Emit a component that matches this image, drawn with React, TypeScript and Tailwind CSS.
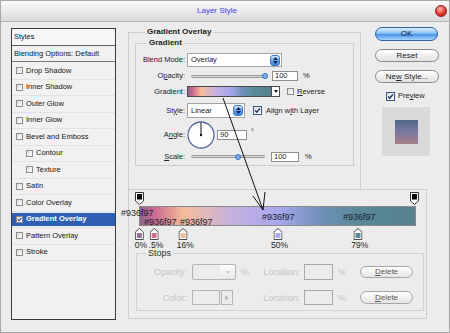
import React from "react";

const GRADIENT =
  "bg-[linear-gradient(to_right,#8e6690_0%,#c8688e_5%,#f6bd9c_16%,#c6b0de_33%,#a8a8ee_50%,#6f90b8_66%,#5a8a98_79%,#56808e_100%)]";

const effects = [
  { label: "Drop Shadow" },
  { label: "Inner Shadow" },
  { label: "Outer Glow" },
  { label: "Inner Glow" },
  { label: "Bevel and Emboss" },
  { label: "Contour", sub: true },
  { label: "Texture", sub: true },
  { label: "Satin" },
  { label: "Color Overlay" },
  { label: "Gradient Overlay", active: true },
  { label: "Pattern Overlay" },
  { label: "Stroke" },
];

const stops = [
  { pos: 0, color: "#936f97", label: "0%" },
  { pos: 5.4, color: "#cf6f93", label: ".5%" },
  { pos: 16, color: "#f6bd9c", label: "16%" },
  { pos: 50, color: "#a9a9f0", label: "50%" },
  { pos: 79, color: "#5a8a98", label: "79%" },
];

// where the hex notes sit on the bar
const hexNotes = [
  { x: -19, y: 1 },
  { x: 4, y: 10 },
  { x: 40, y: 10 },
  { x: 122, y: 5 },
  { x: 203, y: 5 },
];

const Check = ({ checked = false, size = "small" }: { checked?: boolean; size?: "small" | "big" }) => (
  <span
    className={`flex shrink-0 items-center justify-center border bg-gradient-to-br from-[#dedede] to-white ${
      size === "big" ? "h-[9px] w-[9px] border-[#3c5a8c]" : "h-[7px] w-[7px] border-[#8c8c8c]"
    }`}
  >
    {checked && (
      <svg viewBox="0 0 8 8" className="h-full w-full">
        <path d="M1.3 4 L3.2 6 L6.8 1.6" stroke="#1b2f66" strokeWidth="1.7" fill="none" />
      </svg>
    )}
  </span>
);

const Spinner = () => (
  <span className="flex h-[11px] w-[10px] flex-col items-center justify-center gap-[1px] rounded-[3px] border border-[#3f76c4] bg-gradient-to-b from-[#d4e9ff] via-[#6aa9ef] to-[#3a84dc]">
    <svg width="5" height="3" viewBox="0 0 5 3">
      <path d="M2.5 0 L5 3 H0 Z" fill="#10204a" />
    </svg>
    <svg width="5" height="3" viewBox="0 0 5 3">
      <path d="M0 0 H5 L2.5 3 Z" fill="#10204a" />
    </svg>
  </span>
);

const Slider = ({ width, thumb }: { width: string; thumb: string }) => (
  <div className={`relative h-[3px] rounded-full border border-[#9c9c9c] bg-[#d6d6d6] ${width}`}>
    <span
      className={`absolute top-1/2 h-[6px] w-[6px] -translate-y-1/2 rounded-full border border-[#3a6fc0] bg-[#7eaee8] ${thumb}`}
    />
  </div>
);

const Field = ({ children, width }: { children: React.ReactNode; width: string }) => (
  <span className={`flex h-[10px] items-center border border-[#8e8e8e] bg-white pl-[2px] ${width}`}>{children}</span>
);

const Row = ({
  label,
  className,
  children,
}: {
  label: React.ReactNode;
  className: string;
  children: React.ReactNode;
}) => (
  <div className={`flex items-center ${className}`}>
    <span className="w-[49px] text-right">{label}</span>
    <div className="ml-[2px] flex items-center">{children}</div>
  </div>
);

const TitleBar = () => (
  <div className="grid h-[21px] grid-cols-[1fr_auto_1fr] items-center border-b border-[#b4b4b4] bg-gradient-to-b from-[#fbfbfb] to-[#d9d9d9]">
    <span />
    <span className="mr-[16px] text-[8px] text-[#4040f0]">Layer Style</span>
    <span className="flex justify-end pr-[2px]">
      <span className="h-[12px] w-[12px] rounded-full border border-[#9a1c1c] bg-[radial-gradient(circle_at_40%_30%,#ffb6ac,#e0392e_55%,#9e1616)]" />
    </span>
  </div>
);

const StylesList = () => (
  <div className="mt-[1px] flex h-[292px] w-[105px] shrink-0 flex-col border border-[#3c3c3c] bg-[#f1f1f1] text-[#151515]">
    <div className="flex h-[17px] items-center border-b border-[#5c5c5c] bg-[#f6f6f6] pl-[2px]">Styles</div>
    <div className="flex h-[16px] items-center border-b border-[#7a7a7a] pl-[2px]">Blending Options: Default</div>
    <div className="pt-[1px]">
      {effects.map((e) => (
        <div key={e.label} className="h-[16.5px] border-b border-[#e2e2e2] py-[1px]">
          <div
            className={`flex h-full items-center gap-[3px] ${e.sub ? "pl-[14px]" : "pl-[4px]"} ${
              e.active ? "bg-[#2f5fb3] font-bold text-white" : ""
            }`}
          >
            <Check checked={e.active} />
            <span>{e.label}</span>
          </div>
        </div>
      ))}
    </div>
  </div>
);

const OverlayFieldset = () => (
  <fieldset className="h-[162px] w-[233px] shrink-0 border border-b-0 border-[#cdcdcd] px-[6px] pt-[1px]">
    <legend className="ml-[10px] px-[2px] text-[8px] font-bold">Gradient Overlay</legend>
    <fieldset className="border border-[#cdcdcd] pb-[3px] pt-[5px]">
      <legend className="ml-[11px] px-[2px] text-[8px] font-bold">Gradient</legend>

      <Row label="Blend Mode:" className="h-[14px]">
        <div className="flex h-[14px] w-[95px] items-center justify-between border border-[#a4a4a4] bg-white pl-[3px] pr-[1px]">
          <span>Overlay</span>
          <Spinner />
        </div>
      </Row>

      <Row label={<>O<u>p</u>acity:</>} className="mt-[4px] h-[10px]">
        <div className="ml-[4px]">
          <Slider width="w-[77px]" thumb="left-[70px]" />
        </div>
        <span className="ml-[4px]">
          <Field width="w-[26px]">100</Field>
        </span>
        <span className="ml-[5px]">%</span>
      </Row>

      <Row label="Gradient:" className="mt-[5px] h-[11px]">
        <span className={`h-[11px] w-[85px] border border-[#4a4a4a] ${GRADIENT}`} />
        <span className="flex h-[11px] w-[8px] items-center justify-center border border-l-0 border-[#4a4a4a] bg-white">
          <svg width="4" height="3" viewBox="0 0 4 3">
            <path d="M0 0 H4 L2 3 Z" fill="#111" />
          </svg>
        </span>
        <span className="ml-[7px]">
          <Check />
        </span>
        <span className="ml-[3px]">
          <u>R</u>everse
        </span>
      </Row>

      <Row label={<>St<u>y</u>le:</>} className="mt-[6px] h-[15px]">
        <div className="flex h-[15px] w-[58px] items-center justify-between border border-[#a4a4a4] bg-white pl-[3px] pr-[1px]">
          <span>Linear</span>
          <Spinner />
        </div>
        <span className="ml-[8px]">
          <Check checked size="big" />
        </span>
        <span className="ml-[4px]">
          Align w<u>i</u>th Layer
        </span>
      </Row>

      <Row label={<>A<u>n</u>gle:</>} className="mt-[3px] h-[28px]">
        <svg width="28" height="28" viewBox="0 0 28 28">
          <circle cx="14" cy="14" r="13" fill="white" stroke="#5b6f9c" strokeWidth="1.3" />
          <line x1="14" y1="14" x2="14" y2="1.5" stroke="#111" strokeWidth="1" />
          <circle cx="14" cy="14" r="1.2" fill="#111" />
        </svg>
        <span className="ml-[2px]">
          <Field width="w-[30px]">90</Field>
        </span>
        <span className="ml-[4px] self-start pt-[6px]">°</span>
      </Row>

      <Row label={<><u>S</u>cale:</>} className="mt-[2px] h-[11px]">
        <div className="ml-[4px]">
          <Slider width="w-[74px]" thumb="left-[43px]" />
        </div>
        <span className="ml-[6px]">
          <Field width="w-[28px]">100</Field>
        </span>
        <span className="ml-[6px]">%</span>
      </Row>
    </fieldset>
  </fieldset>
);

const PillButton = ({ children, primary = false }: { children: React.ReactNode; primary?: boolean }) => (
  <button
    className={`flex items-center justify-center rounded-full border text-[8px] ${
      primary
        ? "h-[14px] w-[63px] border-[#2f62ad] bg-[linear-gradient(#dcefff,#86c0f6_45%,#4b95e6_55%,#a8d6ff)] text-[#0c1a3a]"
        : "h-[13px] w-[64px] border-[#8a8a8a] bg-gradient-to-b from-white to-[#e2e2e2] text-[#222]"
    }`}
  >
    {children}
  </button>
);

const RightColumn = () => (
  <div className="ml-[14px] flex flex-col">
    <PillButton primary>OK</PillButton>
    <div className="mt-[8px]">
      <PillButton>Reset</PillButton>
    </div>
    <div className="mt-[8px]">
      <PillButton>
        Ne<u>w</u>&nbsp;Style...
      </PillButton>
    </div>
    <div className="mt-[8px] flex items-center pl-[11px]">
      <Check checked size="big" />
      <span className="ml-[3px]">
        Pre<u>v</u>iew
      </span>
    </div>
    <div className="ml-[7px] mt-[6px] flex h-[49px] w-[48px] items-center justify-center bg-[#d9d9d9]">
      <div className="h-[24px] w-[23px] bg-gradient-to-b from-[#50698c] via-[#7a78a0] to-[#a8808a]" />
    </div>
  </div>
);

const TopMarker = () => (
  <svg width="9" height="13" viewBox="0 0 9 13">
    <path d="M0.5 0.5 H8.5 V9 L4.5 12.5 L0.5 9 Z" fill="white" stroke="#333" />
    <rect x="2" y="2" width="5" height="5.5" fill="#000" />
  </svg>
);

const StopMarker = ({ color }: { color: string }) => (
  <svg width="9" height="12" viewBox="0 0 9 12">
    <path d="M4.5 0.5 L8.5 4 V11.5 H0.5 V4 Z" fill="white" stroke="#4a4a4a" />
    <rect x="2" y="5" width="5" height="5" fill={color} />
  </svg>
);

const DeleteButton = ({ tall = false }: { tall?: boolean }) => (
  <span
    className={`flex w-[53px] items-center justify-center rounded-full border border-[#a6a6a6] bg-gradient-to-b from-white to-[#e4e4e4] text-[8px] text-[#5a5a5a] ${
      tall ? "h-[13px]" : "h-[12px]"
    }`}
  >
    <u>D</u>elete
  </span>
);

const GradientEditor = () => (
  <div className="flex h-[130px] w-[299px] flex-col border border-[#cdcdcd] pl-[10px]">
    <div className="ml-[-4px] mt-[2px] flex w-[284px] justify-between">
      <TopMarker />
      <TopMarker />
    </div>

    <div className={`relative mt-[1px] h-[20px] w-[277px] border border-[#8a8a8a] ${GRADIENT}`}>
      {hexNotes.map((n, i) => (
        <span
          key={i}
          className="absolute whitespace-nowrap text-[9px] leading-[10px] text-[#1c1c30]"
          style={{ left: n.x, top: n.y }}
        >
          #936f97
        </span>
      ))}
    </div>

    <div className="relative h-[23px] w-[277px]">
      {stops.map((s) => (
        <div
          key={s.label}
          className="absolute top-[2px] flex -translate-x-1/2 flex-col items-center"
          style={{ left: `${s.pos}%` }}
        >
          <StopMarker color={s.color} />
          <span className="pl-[4px] pt-[1px] text-[8.5px] leading-[8px] text-[#1c1c1c]">{s.label}</span>
        </div>
      ))}
    </div>

    <fieldset className="ml-[-3px] h-[62px] w-[288px] border border-[#d2d2d2] pb-[5px] pt-[7px] text-[9px] text-[#c3c3c3]">
      <legend className="ml-[9px] px-[2px] text-[9px] leading-[8px] text-[#303030]">Stops</legend>

      <div className="flex h-[16px] items-center">
        <span className="w-[50px] text-right">Opacity:</span>
        <span className="ml-[5px] flex h-[16px] w-[44px] rounded-[2px] border border-[#b4b4b4]">
          <span className="flex-1" />
          <span className="flex w-[15px] items-center justify-center rounded-r-[2px] bg-gradient-to-b from-white to-[#e6e6e6]">
            <svg width="4" height="3" viewBox="0 0 4 3">
              <path d="M0 0 H4 L2 3 Z" fill="#c8c8c8" />
            </svg>
          </span>
        </span>
        <span className="w-[24px] pl-[5px]">%</span>
        <span className="w-[40px] text-right">Location:</span>
        <span className="ml-[4px] h-[16px] w-[29px] border border-[#a8a8a8]" />
        <span className="w-[27px] pl-[5px]">%</span>
        <DeleteButton />
      </div>

      <div className="mt-[10px] flex h-[15px] items-center">
        <span className="w-[50px] text-right">Color:</span>
        <span className="ml-[5px] h-[15px] w-[28px] border border-[#b4b4b4]" />
        <span className="ml-[1px] flex h-[15px] w-[12px] items-center justify-center border border-[#b4b4b4]">
          <svg width="4" height="6" viewBox="0 0 4 6">
            <path d="M0 0 L4 3 L0 6 Z" fill="#c0c0c0" />
          </svg>
        </span>
        <span className="w-[27px]" />
        <span className="w-[40px] text-right">Location:</span>
        <span className="ml-[4px] h-[15px] w-[29px] border border-[#a8a8a8]" />
        <span className="w-[27px] pl-[5px]">%</span>
        <DeleteButton tall />
      </div>
    </fieldset>
  </div>
);

const Arrow = () => (
  <svg className="pointer-events-none absolute left-0 top-0" width="450" height="333">
    <path d="M222 97 L262 209 M252 195 L262 209 L264 191" stroke="#111" strokeWidth="1" fill="none" />
  </svg>
);

export default function App() {
  return (
    <div className="relative h-[333px] w-[450px] overflow-hidden border border-[#a8a8a8] bg-[#ececec] font-['Liberation_Sans',Arial,sans-serif] text-[7.5px] leading-[10px] text-[#1c1c1c]">
      <TitleBar />
      <div className="flex items-start pl-[10px] pt-[5px]">
        <StylesList />
        <div className="ml-[12px] flex flex-col">
          <div className="flex items-start">
            <OverlayFieldset />
            <RightColumn />
          </div>
          <GradientEditor />
        </div>
      </div>
      <Arrow />
    </div>
  );
}
